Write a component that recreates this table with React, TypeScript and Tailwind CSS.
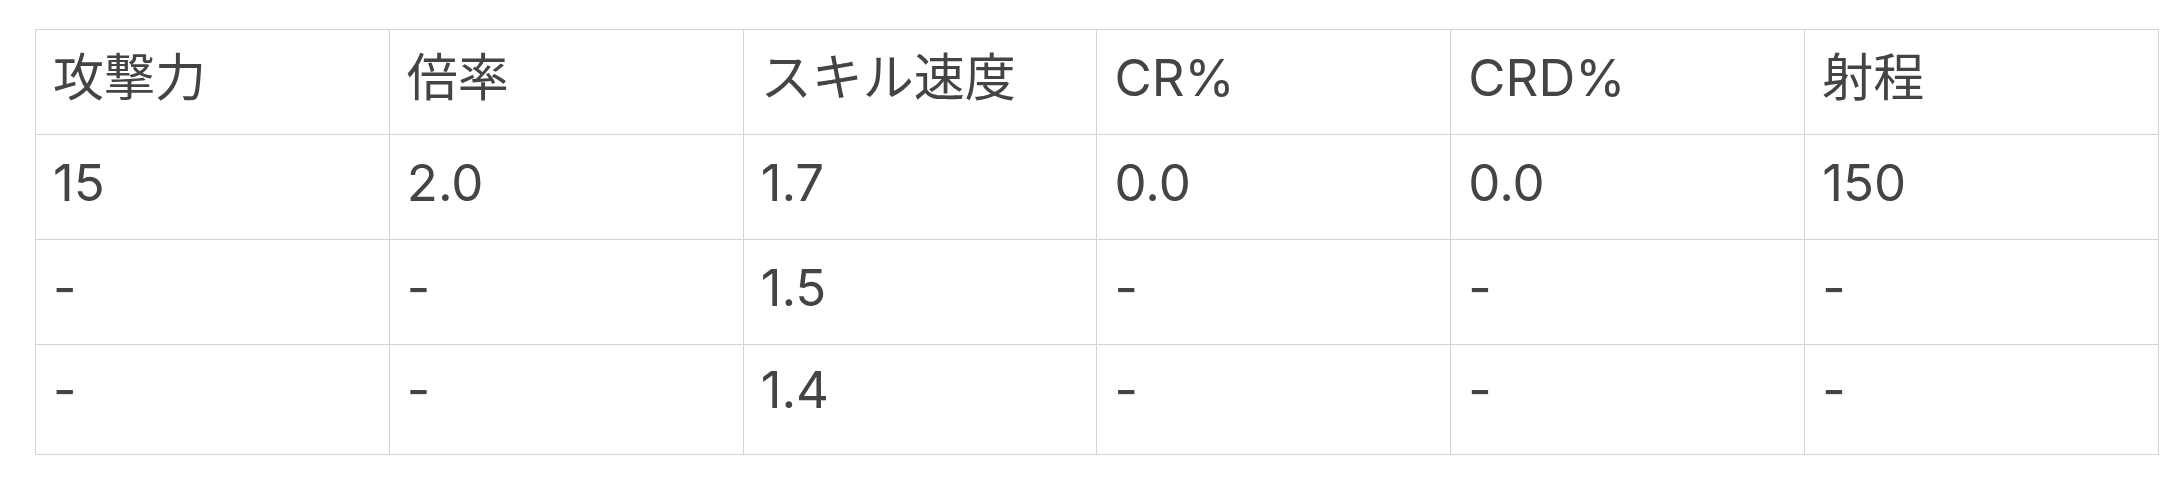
const headers = ["攻撃力", "倍率", "スキル速度", "CR%", "CRD%", "射程"];

const rows = [
  ["15", "2.0", "1.7", "0.0", "0.0", "150"],
  ["-", "-", "1.5", "-", "-", "-"],
  ["-", "-", "1.4", "-", "-", "-"],
];

const App = () => {
  return (
    <div className="bg-white w-[2182px] h-[485px] pt-[29px] pl-[35px] font-['Inter','Noto_Sans_CJK_JP',sans-serif] text-[#444444]">
      <table className="w-[2124px] table-fixed border-collapse text-[51px] leading-none">
        <thead>
          <tr>
            {headers.map((h) => (
              <th
                key={h}
                className="border border-[#d4d4d4] h-[105px] px-[17px] pb-[10px] text-left font-normal align-middle"
              >
                {h}
              </th>
            ))}
          </tr>
        </thead>
        <tbody>
          {rows.map((r, i) => (
            <tr key={i}>
              {r.map((c, j) => (
                <td
                  key={j}
                  className={
                    i === rows.length - 1
                      ? "border border-[#d4d4d4] h-[110px] px-[17px] pb-[20px] align-middle"
                      : "border border-[#d4d4d4] h-[105px] px-[17px] pb-[10px] align-middle"
                  }
                >
                  {c}
                </td>
              ))}
            </tr>
          ))}
        </tbody>
      </table>
    </div>
  );
};

export default App;
